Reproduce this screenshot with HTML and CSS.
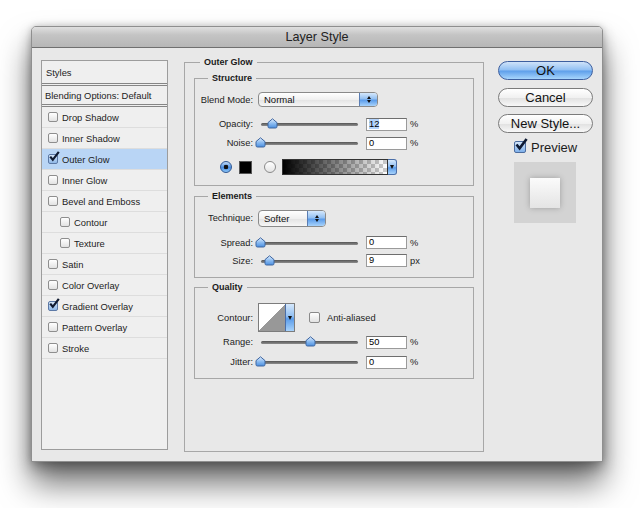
FILE: index.html
```html
<!DOCTYPE html>
<html>
<head>
  <title>Layer Style</title>
  <link rel="stylesheet" href="styles.css">
</head>
<body>

<!-- gradientes compartidos para los iconos -->
<svg class="defs" width="0" height="0">
  <defs>
    <linearGradient id="thumbGrad" x1="0" y1="0" x2="0" y2="1">
      <stop offset="0" stop-color="#e3effd"/>
      <stop offset="0.5" stop-color="#8cbcf1"/>
      <stop offset="1" stop-color="#4b8fe0"/>
    </linearGradient>
  </defs>
</svg>

<div class="window">
  <div class="titlebar">Layer Style</div>

  <div class="content">

    <!-- Lista de efectos -->
    <ul class="effects">
      <li class="head">Styles</li>
      <li class="head blend">Blending Options: Default</li>
      <li><span class="cb"></span>Drop Shadow</li>
      <li><span class="cb"></span>Inner Shadow</li>
      <li class="sel"><span class="cb on"><svg width="12" height="12" viewBox="0 0 12 12"><path d="M2.2 5.6 L4.8 8.8 L10.8 0.8" fill="none" stroke="#101a30" stroke-width="2.2"/></svg></span>Outer Glow</li>
      <li><span class="cb"></span>Inner Glow</li>
      <li><span class="cb"></span>Bevel and Emboss</li>
      <li class="sub"><span class="cb"></span>Contour</li>
      <li class="sub"><span class="cb"></span>Texture</li>
      <li><span class="cb"></span>Satin</li>
      <li><span class="cb"></span>Color Overlay</li>
      <li><span class="cb on"><svg width="12" height="12" viewBox="0 0 12 12"><path d="M2.2 5.6 L4.8 8.8 L10.8 0.8" fill="none" stroke="#101a30" stroke-width="2.2"/></svg></span>Gradient Overlay</li>
      <li><span class="cb"></span>Pattern Overlay</li>
      <li><span class="cb"></span>Stroke</li>
    </ul>

    <!-- Panel central -->
    <fieldset class="panel">
      <legend>Outer Glow</legend>
      <div class="inner">

        <fieldset class="group">
          <legend>Structure</legend>
          <div class="gbody">
            <div class="row r15">
              <label>Blend Mode:</label>
              <div class="popup blendmode"><span>Normal</span><i class="step aqua"></i></div>
            </div>
            <div class="row r14 mt10">
              <label>Opacity:</label>
              <div class="slider">
                <svg class="thumb" style="left: 12%" width="11" height="11" viewBox="0 0 11 11"><path d="M5.5 0.8 L10 4.6 V8.6 Q10 10 8.6 10 H2.4 Q1 10 1 8.6 V4.6 Z" fill="url(#thumbGrad)" stroke="#3f66a0"/></svg>
              </div>
              <div class="num"><span class="hl">12</span></div>
              <span class="unit">%</span>
            </div>
            <div class="row r14 mt5">
              <label>Noise:</label>
              <div class="slider">
                <svg class="thumb" style="left: 0%" width="11" height="11" viewBox="0 0 11 11"><path d="M5.5 0.8 L10 4.6 V8.6 Q10 10 8.6 10 H2.4 Q1 10 1 8.6 V4.6 Z" fill="url(#thumbGrad)" stroke="#3f66a0"/></svg>
              </div>
              <div class="num">0</div>
              <span class="unit">%</span>
            </div>
            <div class="row r16 mt9 colors">
              <span class="radio on"></span>
              <span class="swatch"></span>
              <span class="radio"></span>
              <div class="gradpick">
                <span class="grad"></span><i class="drop aqua"></i>
              </div>
            </div>
          </div>
        </fieldset>

        <fieldset class="group mt4">
          <legend>Elements</legend>
          <div class="gbody">
            <div class="row r16">
              <label>Technique:</label>
              <div class="popup technique"><span>Softer</span><i class="step aqua"></i></div>
            </div>
            <div class="row r13 mt10">
              <label>Spread:</label>
              <div class="slider">
                <svg class="thumb" style="left: 0%" width="11" height="11" viewBox="0 0 11 11"><path d="M5.5 0.8 L10 4.6 V8.6 Q10 10 8.6 10 H2.4 Q1 10 1 8.6 V4.6 Z" fill="url(#thumbGrad)" stroke="#3f66a0"/></svg>
              </div>
              <div class="num">0</div>
              <span class="unit">%</span>
            </div>
            <div class="row r13 mt5">
              <label>Size:</label>
              <div class="slider">
                <svg class="thumb" style="left: 9%" width="11" height="11" viewBox="0 0 11 11"><path d="M5.5 0.8 L10 4.6 V8.6 Q10 10 8.6 10 H2.4 Q1 10 1 8.6 V4.6 Z" fill="url(#thumbGrad)" stroke="#3f66a0"/></svg>
              </div>
              <div class="num">9</div>
              <span class="unit">px</span>
            </div>
          </div>
        </fieldset>

        <fieldset class="group mt3">
          <legend>Quality</legend>
          <div class="gbody top10">
            <div class="row r29">
              <label>Contour:</label>
              <div class="contour"><span class="curve"></span><i class="drop aqua"></i></div>
              <span class="check"></span>
              <span class="checklabel">Anti-aliased</span>
            </div>
            <div class="row r12 mt4">
              <label>Range:</label>
              <div class="slider">
                <svg class="thumb" style="left: 50%" width="11" height="11" viewBox="0 0 11 11"><path d="M5.5 0.8 L10 4.6 V8.6 Q10 10 8.6 10 H2.4 Q1 10 1 8.6 V4.6 Z" fill="url(#thumbGrad)" stroke="#3f66a0"/></svg>
              </div>
              <div class="num">50</div>
              <span class="unit">%</span>
            </div>
            <div class="row r12 mt8">
              <label>Jitter:</label>
              <div class="slider">
                <svg class="thumb" style="left: 0%" width="11" height="11" viewBox="0 0 11 11"><path d="M5.5 0.8 L10 4.6 V8.6 Q10 10 8.6 10 H2.4 Q1 10 1 8.6 V4.6 Z" fill="url(#thumbGrad)" stroke="#3f66a0"/></svg>
              </div>
              <div class="num">0</div>
              <span class="unit">%</span>
            </div>
          </div>
        </fieldset>

      </div>
    </fieldset>

    <!-- Botones y vista previa -->
    <div class="side">
      <div class="btn default">OK</div>
      <div class="btn mt8">Cancel</div>
      <div class="btn mt7">New Style...</div>
      <div class="preview-check">
        <span class="bigcheck"><svg width="14" height="14" viewBox="0 0 14 14"><path d="M2.5 6.5 L5.6 10.4 L12.6 1" fill="none" stroke="#0e1a33" stroke-width="2.6"/></svg></span>
        <span>Preview</span>
      </div>
      <div class="preview-box"><span class="square"></span></div>
    </div>

  </div>
</div>

</body>
</html>
```

FILE: styles.css
```css
html {
  background: #fff;
}

body {
  margin: 0;
  padding: 26px 0 0 31px;
  min-height: 508px;
  box-sizing: border-box;
  background: #fff;
  font-family: "Liberation Sans", Arial, sans-serif;
  color: #1c1c1c;
}

.defs {
  display: block;
  width: 0;
  height: 0;
  overflow: hidden;
}

.window {
  width: 572px;
  height: 436px;
  box-sizing: border-box;
  border: 1px solid #8f8f8f;
  border-radius: 5px 5px 0 0;
  background: #e8e8e8;
  box-shadow: 0 22px 32px rgba(0, 0, 0, 0.55), 0 6px 14px rgba(0, 0, 0, 0.3), 0 0 6px rgba(0, 0, 0, 0.15);
}

.titlebar {
  height: 20px;
  line-height: 21px;
  border-bottom: 1px solid #6f6f6f;
  border-radius: 4px 4px 0 0;
  background: linear-gradient(#e0e0e0, #c4c4c4 40%, #b6b6b6);
  text-align: center;
  font-size: 12.6px;
  color: #222;
}

.content {
  display: flex;
  align-items: flex-start;
  padding: 12px 9px 0 9px;
}

/* lista de efectos */
.effects {
  list-style: none;
  margin: 0;
  padding: 0;
  width: 127px;
  height: 390px;
  box-sizing: border-box;
  border: 1px solid #9c9c9c;
  background: #efefef;
  font-size: 9.4px;
}

.effects li {
  height: 20px;
  border-bottom: 1px solid #dddddd;
  display: flex;
  align-items: center;
  padding-left: 6px;
}

.effects li.head {
  height: 22px;
  padding-left: 4px;
  border-bottom: 3px double #858585;
}

.effects li.blend {
  height: 18px;
  padding-left: 3px;
}

.effects li.sub {
  padding-left: 18px;
}

.effects li.sel {
  background: #b9d5f5;
}

.cb {
  width: 10px;
  height: 10px;
  box-sizing: border-box;
  border: 1px solid #8e8e8e;
  border-radius: 2px;
  background: linear-gradient(#ffffff, #e2e2e2);
  margin-right: 4px;
  display: inline-flex;
  flex-shrink: 0;
}

.cb.on {
  background: linear-gradient(#d6e6f8, #8fb8e8);
  border-color: #5c79a6;
}

.cb svg {
  margin: -4px 0 0 -1px;
  flex-shrink: 0;
}

/* panel central */
fieldset {
  margin: 0;
  padding: 0;
  min-width: 0;
  border: 1px solid #a7a7a7;
  box-sizing: border-box;
}

legend {
  padding: 0 4px;
  margin-left: 13px;
  font-weight: bold;
  font-size: 9px;
  line-height: 12px;
  color: #1a1a1a;
}

.panel {
  width: 300px;
  height: 396px;
  margin: -4px 0 0 16px;
}

.panel > legend {
  margin-left: 15px;
}

.inner {
  padding: 4px 9px 0 9px;
}

.group {
  width: 280px;
}

.gbody {
  padding: 8px 0 10px 0;
}

.gbody.top10 {
  padding-top: 10px;
}

.mt3 { margin-top: 3px; }
.mt4 { margin-top: 4px; }
.mt5 { margin-top: 5px; }
.mt7 { margin-top: 7px; }
.mt8 { margin-top: 8px; }
.mt9 { margin-top: 9px; }
.mt10 { margin-top: 10px; }

.row {
  display: flex;
  align-items: center;
  font-size: 9.3px;
}

.r12 { height: 12px; }
.r13 { height: 13px; }
.r14 { height: 14px; }
.r15 { height: 15px; }
.r16 { height: 16px; }
.r29 { height: 29px; }

.row label {
  width: 58px;
  margin-right: 5px;
  text-align: right;
  flex-shrink: 0;
}

.aqua {
  background: linear-gradient(#d5e8fc, #93c0f2 45%, #5b9cea 55%, #a8d3fb);
}

.popup {
  display: flex;
  box-sizing: border-box;
  border: 1px solid #8a8a8a;
  border-radius: 4px;
  background: linear-gradient(#ffffff, #f0f0f0 50%, #e3e3e3 51%, #f6f6f6);
  overflow: hidden;
  font-size: 9.5px;
  color: #111;
}

.popup span {
  flex: 1;
  padding-left: 5px;
  display: flex;
  align-items: center;
}

.blendmode {
  width: 120px;
  height: 15px;
}

.technique {
  width: 68px;
  height: 17px;
}

.step {
  width: 17px;
  border-left: 1px solid #5a7db3;
  display: flex;
  flex-direction: column;
  align-items: center;
  justify-content: center;
  gap: 1px;
}

.step::before {
  content: "";
  border-left: 2.5px solid transparent;
  border-right: 2.5px solid transparent;
  border-bottom: 3px solid #111;
}

.step::after {
  content: "";
  border-left: 2.5px solid transparent;
  border-right: 2.5px solid transparent;
  border-top: 3px solid #111;
}

.slider {
  position: relative;
  width: 100px;
  height: 12px;
  flex-shrink: 0;
}

.slider::before {
  content: "";
  position: absolute;
  left: 3px;
  right: 0;
  top: 5px;
  height: 3px;
  border-radius: 2px;
  background: linear-gradient(#555, #8d8d8d);
}

.thumb {
  position: absolute;
  top: 0;
  margin-left: -3px;
}

.num {
  width: 41px;
  height: 13px;
  box-sizing: border-box;
  margin-left: 8px;
  border: 1px solid #9a9a9a;
  border-top-color: #6e6e6e;
  background: #fff;
  padding-left: 2px;
  line-height: 11px;
  color: #000;
  flex-shrink: 0;
}

.hl {
  background: #b3d3fb;
}

.unit {
  margin-left: 3px;
}

.colors {
  padding-left: 25px;
}

.radio {
  width: 12px;
  height: 12px;
  box-sizing: border-box;
  border-radius: 50%;
  border: 1px solid #8a8a8a;
  background: linear-gradient(#ffffff, #e4e4e4);
  margin-left: 12px;
}

.radio.on {
  margin-left: 0;
  border-color: #2f5793;
  background: radial-gradient(circle, #111 0 2px, transparent 2.6px), linear-gradient(#c4dcf7, #4b8fe2 55%, #8cc6f8);
}

.swatch {
  width: 13px;
  height: 13px;
  box-sizing: border-box;
  margin-left: 7px;
  background: #000;
  border: 1px solid #555;
}

.gradpick {
  display: flex;
  height: 16px;
  margin-left: 6px;
}

.grad {
  width: 106px;
  box-sizing: border-box;
  border: 1px solid #333;
  background: linear-gradient(to right, #000, rgba(0, 0, 0, 0)),
    repeating-conic-gradient(#cccccc 0 25%, #ffffff 0 50%) 0 0 / 8px 8px;
}

.drop {
  width: 9px;
  box-sizing: border-box;
  border: 1px solid #4a6ea8;
  border-left: none;
  border-radius: 0 3px 3px 0;
  display: flex;
  align-items: center;
  justify-content: center;
}

.drop::after {
  content: "";
  border-left: 2.5px solid transparent;
  border-right: 2.5px solid transparent;
  border-top: 4px solid #111;
}

.contour {
  display: flex;
  width: 37px;
  height: 29px;
  box-sizing: border-box;
  border: 1px solid #7c7c7c;
}

.curve {
  flex: 1;
  background: linear-gradient(to bottom right, #ffffff 50%, #989898 50%);
}

.contour .drop {
  border: none;
  border-left: 1px solid #4a6ea8;
  border-radius: 0;
}

.check {
  width: 11px;
  height: 11px;
  box-sizing: border-box;
  margin-left: 14px;
  border: 1px solid #8a8a8a;
  border-radius: 2px;
  background: linear-gradient(#ffffff, #e2e2e2);
}

.checklabel {
  margin-left: 7px;
}

/* columna derecha */
.side {
  width: 95px;
  margin: 1px 0 0 14px;
  display: flex;
  flex-direction: column;
}

.btn {
  height: 19px;
  box-sizing: border-box;
  border-radius: 10px;
  border: 1px solid #7b7b7b;
  background: linear-gradient(#ffffff, #f1f1f1 50%, #e0e0e0 51%, #f8f8f8);
  font-size: 13px;
  line-height: 17px;
  text-align: center;
  color: #111;
}

.btn.default {
  border-color: #3d5f9f;
  background: linear-gradient(#cfe3f9, #90bff3 48%, #5d9eea 52%, #a7d5fc);
}

.preview-check {
  display: flex;
  align-items: center;
  height: 12px;
  margin: 8px 0 0 16px;
  font-size: 13px;
}

.bigcheck {
  width: 12px;
  height: 12px;
  box-sizing: border-box;
  border: 1px solid #4c6c9e;
  border-radius: 2px;
  background: linear-gradient(#d3e5fa, #7fb0ea);
  margin-right: 5px;
  display: inline-flex;
}

.bigcheck svg {
  margin: -4px 0 0 -1px;
  flex-shrink: 0;
}

.preview-box {
  width: 62px;
  height: 61px;
  margin: 9px 0 0 16px;
  background: #d3d3d3;
  display: flex;
  align-items: center;
  justify-content: center;
}

.square {
  width: 30px;
  height: 30px;
  background: linear-gradient(#fbfbfb, #e4e4e4);
  box-shadow: 0 0 6px rgba(0, 0, 0, 0.25);
}
```
